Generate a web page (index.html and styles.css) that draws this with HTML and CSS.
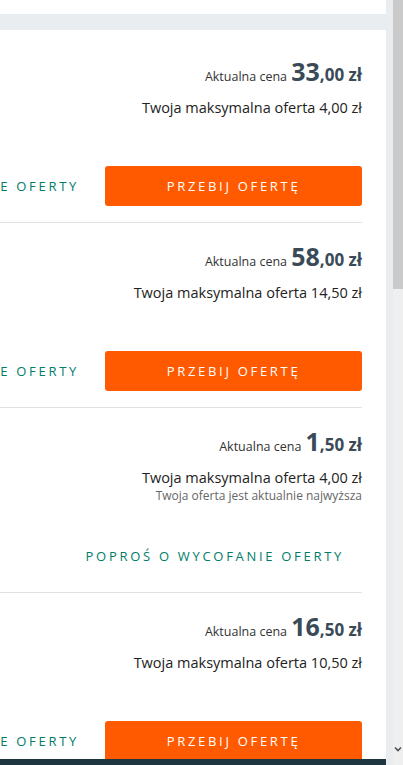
FILE: index.html
```html
<!DOCTYPE html>
<html lang="pl">
<head>
  <meta charset="UTF-8">
  <title>Moje oferty</title>
  <link rel="stylesheet" href="styles.css">
</head>
<body>

  <div class="page">
    <div class="prev-card"></div>

    <div class="card">

      <div class="item">
        <div class="info">
          <p class="price"><span class="label">Aktualna cena</span> <strong><span class="big">33</span>,00 zł</strong></p>
          <p class="max">Twoja maksymalna oferta 4,00 zł</p>
        </div>
        <div class="actions">
          <button class="btn-withdraw">Poproś o wycofanie oferty</button>
          <button class="btn-bid">Przebij ofertę</button>
        </div>
      </div>

      <div class="item">
        <div class="info">
          <p class="price"><span class="label">Aktualna cena</span> <strong><span class="big">58</span>,00 zł</strong></p>
          <p class="max">Twoja maksymalna oferta 14,50 zł</p>
        </div>
        <div class="actions">
          <button class="btn-withdraw">Poproś o wycofanie oferty</button>
          <button class="btn-bid">Przebij ofertę</button>
        </div>
      </div>

      <div class="item">
        <div class="info">
          <p class="price"><span class="label">Aktualna cena</span> <strong><span class="big">1</span>,50 zł</strong></p>
          <p class="max">Twoja maksymalna oferta 4,00 zł</p>
          <p class="note">Twoja oferta jest aktualnie najwyższa</p>
        </div>
        <div class="actions">
          <button class="btn-withdraw">Poproś o wycofanie oferty</button>
        </div>
      </div>

      <div class="item">
        <div class="info">
          <p class="price"><span class="label">Aktualna cena</span> <strong><span class="big">16</span>,50 zł</strong></p>
          <p class="max">Twoja maksymalna oferta 10,50 zł</p>
        </div>
        <div class="actions">
          <button class="btn-withdraw">Poproś o wycofanie oferty</button>
          <button class="btn-bid">Przebij ofertę</button>
        </div>
      </div>

    </div>

    <div class="bottom-bar"></div>
  </div>

  <!-- pasek przewijania -->
  <div class="scrollbar">
    <div class="thumb"></div>
    <div class="track">
      <svg width="8" height="6" viewBox="0 0 8 6"><path d="M1 1.5 L4 4.5 L7 1.5" fill="none" stroke="#505050" stroke-width="1.6"/></svg>
    </div>
  </div>

</body>
</html>
```

FILE: styles.css
```css
* {
  box-sizing: border-box;
}

html, body {
  height: 100%;
}

body {
  margin: 0;
  display: flex;
  overflow: hidden;
  font-family: "Open Sans", Arial, sans-serif;
  color: #222;
}

.page {
  flex: 1;
  display: flex;
  flex-direction: column;
  background-color: #e9edf0;
  padding-right: 7px;
  overflow: hidden;
}

.prev-card {
  height: 14px;
  background-color: #fff;
}

.card {
  flex: 1;
  margin-top: 16px;
  background-color: #fff;
  padding: 8px 24px 0 0;
  overflow: hidden;
}

.item {
  padding: 18px 0 16px;
  border-bottom: 1px solid #e1e1e1;
}

.info {
  height: 110px;
  text-align: right;
}

.info p {
  margin: 0;
}

.price {
  height: 30px;
  line-height: 30px;
}

.label {
  font-size: 12.5px;
  color: #333;
}

.price strong {
  font-size: 17px;
  font-weight: 700;
  color: #3a4b57;
}

.price .big {
  font-size: 25px;
}

.max {
  margin-top: 12px !important;
  font-size: 14.5px;
  line-height: 20px;
  color: #222;
}

.note {
  font-size: 12px;
  line-height: 16px;
  color: #666;
}

.actions {
  display: flex;
  justify-content: flex-end;
  gap: 8px;
  height: 40px;
}

.actions button {
  flex-shrink: 0;
  height: 40px;
  border: none;
  font-family: "Open Sans", Arial, sans-serif;
  font-size: 13px;
  letter-spacing: 2.7px;
  text-transform: uppercase;
  cursor: pointer;
}

.btn-withdraw {
  background: none;
  color: #007d69;
  padding: 0 18px;
}

.btn-bid {
  width: 257px;
  background-color: #ff5a00;
  color: #fff;
  border-radius: 3px;
}

.bottom-bar {
  height: 6px;
  background-color: #1e3640;
}

.scrollbar {
  width: 10px;
  display: flex;
  flex-direction: column;
}

.thumb {
  height: 289px;
  background-color: #cacaca;
}

.track {
  flex: 1;
  display: flex;
  align-items: flex-end;
  justify-content: center;
  padding-bottom: 13px;
  background-color: #efefef;
}
```
